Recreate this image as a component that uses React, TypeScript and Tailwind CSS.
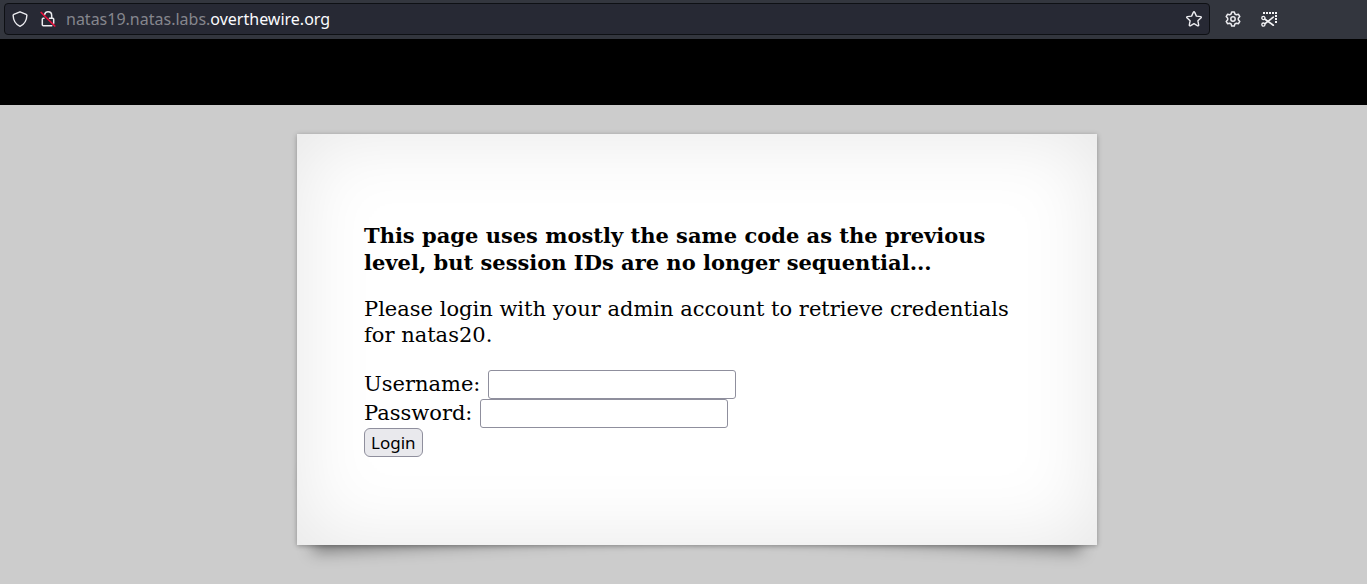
import React from "react";

function ShieldIcon() {
  return (
    <svg aria-hidden="true" viewBox="0 0 16 16" className="size-4" fill="none" stroke="#ececf0" strokeWidth="1.400" strokeLinejoin="round">
      <path d="M8 .8 14.200 3.300c.5.200.7.500.7 1C14.700 9.300 12 13.600 8 15.300 4 13.600 1.300 9.300 1.100 4.300c0-.5.200-.8.700-1L8 .8Z" />
    </svg>
  );
}

function InsecureLockIcon() {
  return (
    <svg aria-hidden="true" viewBox="0 0 16 16" className="size-4" fill="none" strokeLinecap="round" strokeLinejoin="round">
      <path d="M4.500 3.700C5 2 6.300.8 8 .8c2.200 0 3.700 1.600 3.700 3.700v2.700M9.500 7.200h3.200c.6 0 1 .4 1 1v4M4 7.200h-.7c-.6 0-1 .4-1 1v5.600c0 .6.400 1 1 1h8.500" stroke="#ececf0" strokeWidth="1.500" />
      <path d="M1.200 1.500 14.800 15" stroke="#e8113c" strokeWidth="1.700" />
    </svg>
  );
}

function StarIcon() {
  return (
    <svg aria-hidden="true" viewBox="0 0 16 16" className="size-4" fill="none" stroke="#ececf0" strokeWidth="1.400" strokeLinejoin="round">
      <path d="M7.400 1.100c.2-.5 1-.5 1.200 0l1.800 4 4.300.5c.6.100.8.8.4 1.200l-3.200 3 .8 4.300c.1.600-.5 1-1 .7L8 12.700l-3.700 2.100c-.5.300-1.100-.1-1-.7l.8-4.300-3.200-3c-.4-.4-.2-1.100.4-1.200l4.300-.5 1.800-4Z" />
    </svg>
  );
}

function GearIcon() {
  return (
    <svg aria-hidden="true" viewBox="0 0 16 16" className="size-4" fill="none" stroke="#ececf0" strokeWidth="1.500" strokeLinejoin="round">
      <path d="M6.700.9h2.600l.6 2.100 1.500.8 2.100-.5 1.300 2.300L13.300 7.200v1.600l1.500 1.600-1.300 2.300-2.100-.5-1.500.8-.6 2.100H6.700l-.6-2.100-1.500-.8-2.100.5-1.300-2.300 1.500-1.600V7.200L1.200 5.600l1.300-2.300 2.100.5L6.100 3Z" />
      <circle cx="8" cy="8" r="2.200" />
    </svg>
  );
}

function ScreenshotIcon() {
  return (
    <svg aria-hidden="true" viewBox="0 0 16 16" className="size-4" fill="none" stroke="#f4f4f6">
      <path d="M2 2h14" strokeWidth="2" strokeDasharray="2 1" />
      <path d="M15 4v8" strokeWidth="2" strokeDasharray="2 1" />
      <path d="M4 8.200 12.300 14.200M4 12.600 12.300 6.200" strokeWidth="1.700" strokeLinecap="round" />
      <circle cx="2.400" cy="7" r="1.600" strokeWidth="1.300" />
      <circle cx="2.400" cy="13.600" r="1.600" strokeWidth="1.300" />
    </svg>
  );
}

function BrowserBar() {
  return (
    <header className="flex h-[39px] items-center bg-[#33363e] pb-px pl-1 pr-[90px] font-['Noto_Sans',sans-serif]">
      <div className="flex h-8 min-w-0 flex-1 items-center rounded border border-[#0e1014] bg-[#272934] px-[7px]">
        <button type="button" aria-label="Tracking protection">
          <ShieldIcon />
        </button>
        <button type="button" aria-label="Connection is not secure" className="ml-3">
          <InsecureLockIcon />
        </button>
        <a href="#" className="ml-[10px] min-w-0 flex-1 truncate text-[16px] leading-6 text-[#85868d]">
          natas19.natas.labs.<span className="text-[#fbfbfe]">overthewire.org</span>
        </a>
        <button type="button" aria-label="Bookmark this page">
          <StarIcon />
        </button>
      </div>
      <button type="button" aria-label="Settings" className="ml-[15px]">
        <GearIcon />
      </button>
      <button type="button" aria-label="Take a screenshot" className="ml-5">
        <ScreenshotIcon />
      </button>
    </header>
  );
}

function LoginForm() {
  const field = "h-[29px] w-[248px] rounded-[3px] border border-[#8f8f9d] bg-white px-1 font-['Noto_Sans',sans-serif] text-[17px] outline-none";
  return (
    <form className="mt-[22px]" onSubmit={(e) => e.preventDefault()}>
      <div className="flex items-center gap-2">
        <label htmlFor="username">Username:</label>
        <input id="username" name="username" type="text" className={field} />
      </div>
      <div className="flex items-center gap-2">
        <label htmlFor="password">Password:</label>
        <input id="password" name="password" type="password" className={field} />
      </div>
      <button type="submit" className="h-[29px] rounded-md border border-[#8f8f9d] bg-[#e9e9ed] px-[6px] font-['Noto_Sans',sans-serif] text-[17px] leading-6">
        Login
      </button>
    </form>
  );
}

export default function App() {
  return (
    <div className="min-h-screen bg-[#cccccc] text-black">
      <BrowserBar />
      <div className="h-[66px] bg-black" />
      <main className="isolate pb-[39px] pl-[27px] pt-[29px]">
        <section className="relative mx-auto max-w-[800px]">
          <div className="absolute bottom-5 left-[13px] -z-10 h-1/5 w-1/2 -rotate-3 shadow-[0_17px_16px_rgba(0,0,0,0.38)]" />
          <div className="absolute bottom-5 right-[13px] -z-10 h-1/5 w-1/2 rotate-3 shadow-[0_17px_16px_rgba(0,0,0,0.38)]" />
          <div className="bg-white px-[67px] py-[88px] font-['DejaVu_Serif',serif] text-[21px] leading-[27px] shadow-[0_1px_5px_rgba(0,0,0,0.3),inset_0_0_80px_rgba(0,0,0,0.1)]">
            <p className="font-bold">This page uses mostly the same code as the previous level, but session IDs are no longer sequential...</p>
            <p className="mt-5 leading-[26px]">Please login with your admin account to retrieve credentials for natas20.</p>
            <LoginForm />
          </div>
        </section>
      </main>
    </div>
  );
}
